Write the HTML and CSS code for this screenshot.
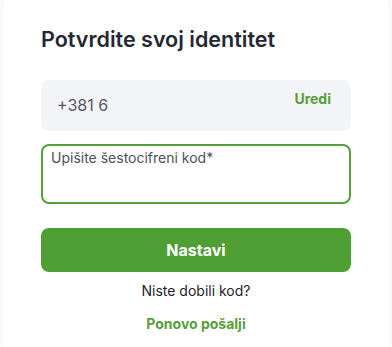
FILE: index.html
```html
<!DOCTYPE html>
<html lang="sr">
<head>
<meta charset="utf-8">
<link rel="stylesheet" href="styles.css">
</head>
<body>
<div class="modal">
  <h1 class="title">Potvrdite svoj identitet</h1>
  <div class="phone">
    <span class="phone-num">+381 6</span>
    <a class="edit">Uredi</a>
  </div>
  <label class="code">
    <span class="code-label">Upišite šestocifreni kod*</span>
  </label>
  <button class="btn">Nastavi</button>
  <p class="hint">Niste dobili kod?</p>
  <a class="resend">Ponovo pošalji</a>
</div>
</body>
</html>
```
FILE: styles.css
```css
* { box-sizing: border-box; }
html, body { margin: 0; padding: 0; background: #ffffff; }
body {
  font-family: Inter, "Noto Sans", sans-serif;
  width: 392px;
  height: 347px;
  overflow: hidden;
}
.modal {
  height: 347px;
  margin: 0 3px;
  padding: 22px 38px 0 38px;
  background: #fff;
  box-shadow: -2px 0 3px rgba(0,0,0,0.04), 2px 0 3px rgba(0,0,0,0.04);
  display: flex;
  flex-direction: column;
  align-items: stretch;
}
.title {
  margin: 0 0 24px 0;
  font-size: 21.5px;
  line-height: 34px;
  font-weight: 600;
  color: #232832;
}
.phone {
  height: 51px;
  background: #f3f4f8;
  border-radius: 8px;
  display: flex;
  justify-content: space-between;
  align-items: flex-start;
  padding: 0 20px 0 16px;
}
.phone-num {
  margin-top: 15px;
  font-size: 16px;
  line-height: 20px;
  color: #555a63;
}
.edit {
  margin-top: 10px;
  font-size: 14px;
  line-height: 18px;
  font-weight: 700;
  color: #5a9e3c;
}
.code {
  display: block;
  margin-top: 13px;
  height: 60px;
  border: 2px solid #55a03a;
  border-radius: 8px;
  padding: 1px 8px;
}
.code-label {
  font-size: 14px;
  line-height: 17px;
  color: #4b5060;
}
.btn {
  margin-top: 24px;
  height: 44px;
  border: none;
  border-radius: 8px;
  background: #4f9f35;
  color: #fff;
  font-family: inherit;
  font-size: 16px;
  font-weight: 700;
}
.hint {
  margin: 10px 0 0 0;
  text-align: center;
  font-size: 14px;
  line-height: 18px;
  color: #1f232b;
}
.resend {
  margin-top: 15px;
  text-align: center;
  font-size: 14px;
  line-height: 18px;
  font-weight: 700;
  color: #5a9e3c;
}
```
